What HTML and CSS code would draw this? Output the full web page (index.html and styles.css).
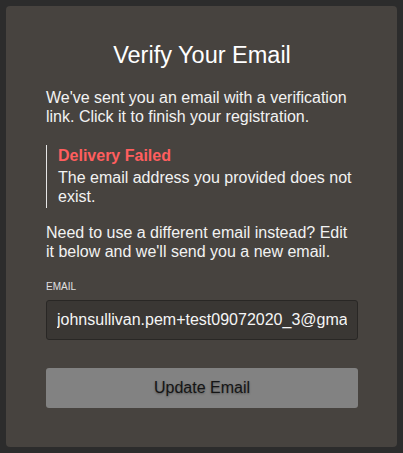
FILE: index.html
```html
<!DOCTYPE html>
<html>
<head>
<meta charset="utf-8">
<link rel="stylesheet" href="styles.css">
</head>
<body>
<div class="card">
  <h1 class="title">Verify Your Email</h1>
  <p class="text intro">We've sent you an email with a verification link. Click it to finish your registration.</p>
  <div class="alert">
    <div class="alert-title">Delivery Failed</div>
    <p class="text">The email address you provided does not exist.</p>
  </div>
  <p class="text need">Need to use a different email instead? Edit it below and we'll send you a new email.</p>
  <label class="label" for="email">EMAIL</label>
  <input class="input" id="email" type="text" value="johnsullivan.pem+test09072020_3@gmail.com">
  <button class="btn">Update Email</button>
</div>
</body>
</html>
```
FILE: styles.css
```css
html, body {
  margin: 0;
  padding: 0;
  background: #2c2c2c;
}
body {
  padding: 6px;
  font-family: "Liberation Sans", Arial, sans-serif;
  color: #f2f2f2;
}
.card {
  width: 391px;
  height: 441px;
  box-sizing: border-box;
  background: #47433f;
  border-radius: 4px;
  padding: 35px 39px 0 40px;
  display: flex;
  flex-direction: column;
}
.title {
  margin: 0;
  font-size: 23.5px;
  line-height: 28px;
  font-weight: normal;
  text-align: center;
  color: #ffffff;
}
.text {
  margin: 0;
  font-size: 16px;
  line-height: 19px;
}
.intro {
  margin-top: 19px;
}
.alert {
  margin-top: 19px;
  border-left: 1px solid #e6e6e6;
  padding: 1px 0 2px 11px;
}
.alert-title {
  font-size: 16px;
  line-height: 19px;
  font-weight: bold;
  color: #ff5e5e;
  margin-bottom: 3px;
}
.need {
  margin-top: 15px;
}
.label {
  margin-top: 20px;
  font-size: 10px;
  line-height: 12px;
  color: #e0e0e0;
}
.input {
  margin-top: 7px;
  height: 40px;
  box-sizing: border-box;
  width: 312px;
  background: #3a3734;
  border: 1px solid #292725;
  border-radius: 3px;
  padding: 0 10px;
  font-family: "Liberation Sans", Arial, sans-serif;
  font-size: 16px;
  color: #f5f5f5;
  outline: none;
}
.btn {
  margin-top: 28px;
  height: 40px;
  width: 312px;
  background: #828282;
  border: none;
  border-radius: 3px;
  font-family: "Liberation Sans", Arial, sans-serif;
  font-size: 16px;
  color: #151515;
  text-shadow: 0 1px 2px rgba(0,0,0,0.35);
  padding: 0;
}
```
